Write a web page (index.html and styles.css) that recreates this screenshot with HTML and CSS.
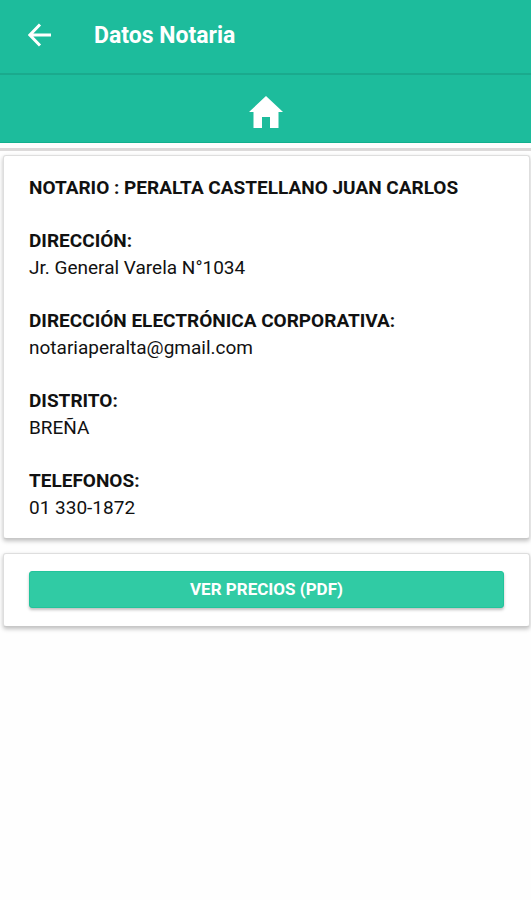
FILE: index.html
```html
<!DOCTYPE html>
<html lang="es">

<head>
	<meta charset="utf-8" />
	<meta name="viewport" content="width=device-width, initial-scale=1" />
	<title>Datos Notaria</title>
	<link rel="stylesheet" href="styles.css">
</head>

<body>
	<header class="toolbar">
		<button type="button" class="back" aria-label="Volver">
			<svg class="back-icon" viewBox="0 0 24 24">
				<path d="M23 12H2M12 1.5L1.8 12L12 22.5" />
			</svg>
		</button>
		<h1 class="title">Datos Notaria</h1>
	</header>
	<nav class="tabs">
		<a href="#" class="home" aria-label="Inicio">
			<svg class="home-icon" viewBox="0 0 34 32">
				<path d="M17 0L34 16H29.500V32H21V21H13V32H4.500V16H0Z" />
			</svg>
		</a>
	</nav>
	<main class="content">
		<section class="card">
			<h2 class="name">NOTARIO : PERALTA CASTELLANO JUAN CARLOS</h2>
			<dl class="data">
				<div class="field">
					<dt>DIRECCIÓN:</dt>
					<dd>Jr. General Varela N°1034</dd>
				</div>
				<div class="field">
					<dt>DIRECCIÓN ELECTRÓNICA CORPORATIVA:</dt>
					<dd>notariaperalta@gmail.com</dd>
				</div>
				<div class="field">
					<dt>DISTRITO:</dt>
					<dd>BREÑA</dd>
				</div>
				<div class="field">
					<dt>TELEFONOS:</dt>
					<dd>01 330-1872</dd>
				</div>
			</dl>
		</section>
		<section class="card card-action">
			<button type="button" class="btn">VER PRECIOS (PDF)</button>
		</section>
	</main>
</body>

</html>
```

FILE: styles.css
```css
* {
	box-sizing: border-box;
}

body {
	min-height: 100vh;
	margin: 0;
	background-color: #fefefe;
	font: normal 19px/27px Roboto, sans-serif;
	color: #111;
}

.toolbar {
	display: flex;
	align-items: center;
	gap: 42px;
	height: 75px;
	padding: 0 28px 3px;
	background-color: #1dbc9c;
	border-bottom: 2px solid #1aaa8d;
}

.back {
	display: flex;
	padding: 0;
	border: 0;
	background: none;
}

.back-icon {
	width: 24px;
	height: 24px;
	fill: none;
	stroke: #fff;
	stroke-width: 3;
}

.title {
	margin: 0;
	font-size: 23px;
	font-weight: 700;
	color: #fff;
}

.tabs {
	display: flex;
	justify-content: center;
	height: 68px;
	padding-top: 21px;
	background-color: #1dbc9c;
	border-bottom: 1px solid #12b08e;
}

.home-icon {
	display: block;
	width: 34px;
	height: 32px;
	fill: #fff;
}

.content {
	display: flex;
	flex-direction: column;
	gap: 14px;
	margin-top: 5px;
	padding: 4px 1px 16px 3px;
	border-top: 3px solid #dcdada;
}

.card {
	padding: 19px 25px 17px;
	background-color: #fff;
	border: 1px solid #dedede;
	border-bottom-color: #c8c8c8;
	border-radius: 3px;
	box-shadow: 0 2px 4px rgba(0, 0, 0, 0.25);
}

.card-action {
	padding: 17px 25px 18px;
}

.name {
	margin: 0;
	font-size: 19px;
	font-weight: 700;
	line-height: 26px;
}

.data {
	margin: 0;
}

.field {
	margin-top: 27px;
}

.field dt {
	font-weight: 700;
	line-height: 26px;
}

.field dd {
	margin: 0;
}

.btn {
	display: block;
	width: 100%;
	height: 37px;
	padding: 0;
	border: 1px solid #22c49b;
	border-radius: 3px;
	background-color: #30cba4;
	box-shadow: 0 2px 3px rgba(0, 0, 0, 0.25);
	font: 700 17px/27px Roboto, sans-serif;
	color: #fff;
}
```
